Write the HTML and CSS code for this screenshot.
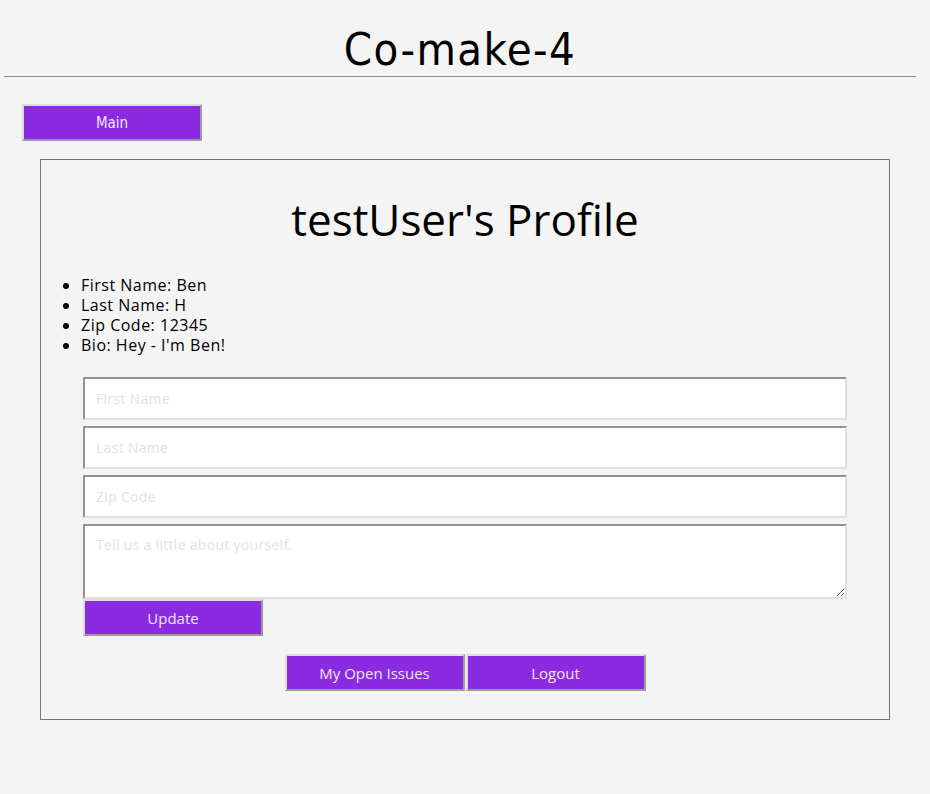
FILE: index.html
```html
<!DOCTYPE html>
<html>
<head>
<meta charset="utf-8">
<link rel="stylesheet" href="styles.css">
</head>
<body>
<header class="site-header">
  <h1 class="site-title">Co-make-4</h1>
</header>
<nav class="nav">
  <button class="btn btn-narrow">Main</button>
</nav>
<main class="card">
  <h2 class="profile-title">testUser's Profile</h2>
  <ul class="info">
    <li>First Name: Ben</li>
    <li>Last Name: H</li>
    <li>Zip Code: 12345</li>
    <li>Bio: Hey - I'm Ben!</li>
  </ul>
  <form class="form">
    <input class="field" type="text" placeholder="First Name">
    <input class="field" type="text" placeholder="Last Name">
    <input class="field" type="text" placeholder="Zip Code">
    <textarea class="field area" placeholder="Tell us a little about yourself."></textarea>
    <button class="btn" type="button">Update</button>
  </form>
  <div class="actions">
    <button class="btn">My Open Issues</button>
    <button class="btn">Logout</button>
  </div>
</main>
</body>
</html>
```
FILE: styles.css
```css
html, body {
  margin: 0;
  padding: 0;
  background: #f4f4f4;
}
body {
  font-family: "Open Sans", "DejaVu Sans", sans-serif;
  color: #000;
  padding: 0 14px 0 4px;
}
.site-header {
  border-bottom: 1px solid #888;
  text-align: center;
  padding-top: 26px;
  box-sizing: border-box;
  height: 77px;
}
.site-title {
  margin: 0;
  font-family: "DejaVu Sans", sans-serif;
  font-stretch: condensed;
  font-weight: normal;
  font-size: 45px;
  letter-spacing: 1.4px;
  line-height: 48px;
}
.nav {
  padding: 27px 0 0 18px;
  height: 82px;
  box-sizing: border-box;
}
.btn {
  width: 180px;
  height: 37px;
  background: #8a2be2;
  color: #f0e6ff;
  border: 2px solid;
  border-color: #dcdcdc #9a9a9a #9a9a9a #dcdcdc;
  font-family: "Open Sans", sans-serif;
  font-size: 15px;
  padding: 0;
  margin: 0;
}
.btn-narrow {
  font-family: "DejaVu Sans", sans-serif;
  font-stretch: condensed;
}
.card {
  margin: 0 0 0 36px;
  width: 850px;
  border: 1px solid #777;
  height: 561px;
  box-sizing: border-box;
}
.profile-title {
  margin: 0;
  padding-top: 33px;
  text-align: center;
  font-weight: normal;
  font-size: 44px;
  line-height: 52px;
}
.info {
  margin: 30px 0 0 0;
  padding-left: 40px;
  font-size: 16px;
  letter-spacing: 0.5px;
  line-height: 20px;
}
.form {
  width: 764px;
  margin: 22px auto 0;
  display: flex;
  flex-direction: column;
  align-items: flex-start;
  gap: 6px;
}
.field {
  width: 764px;
  height: 43px;
  box-sizing: border-box;
  margin: 0;
  border: 2px solid;
  border-color: #929292 #e0e0e0 #e0e0e0 #929292;
  background: #fff;
  padding: 0 11px;
  font-family: "Open Sans", sans-serif;
  font-size: 14px;
  letter-spacing: 0.3px;
}
.area {
  height: 75px;
  padding-top: 9px;
  resize: vertical;
}
.field::placeholder {
  color: #e4e0e4;
}
.form .btn {
  margin-top: -6px;
}
.actions {
  display: flex;
  justify-content: center;
  gap: 1px;
  margin-top: 18px;
}
```
